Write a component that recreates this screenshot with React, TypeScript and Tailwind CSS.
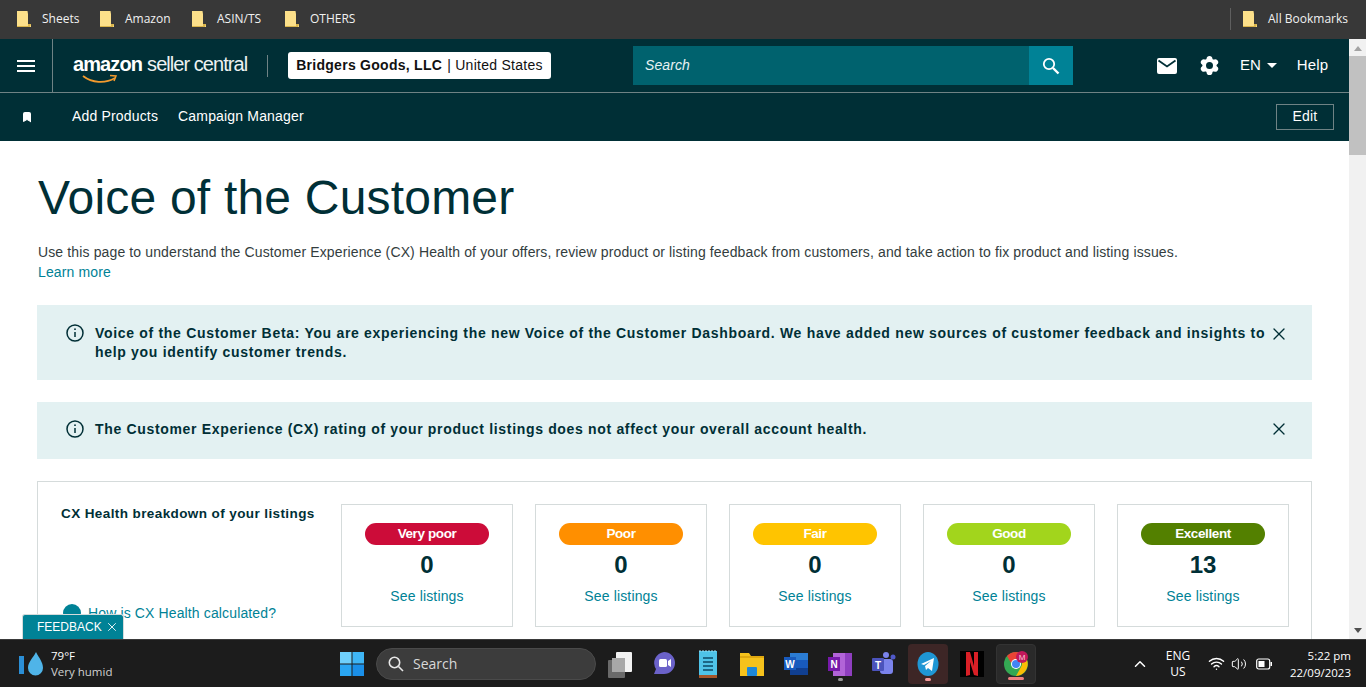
import React from "react";
import { Bookmark, ChevronUp, Settings, Volume2, Wifi, X } from "lucide-react";

const FolderIcon = () => (
  <svg width="14" height="16" viewBox="0 0 14 16" className="shrink-0">
    <path d="M0 0h10.5l.5 3v10h3v3H0z" fill="#fce08a" />
    <path d="M11 13h3l-1 3h-2z" fill="#d9b44a" />
    <path d="M0 15h11v1H0z" fill="#d9b44a" />
  </svg>
);

const InfoIcon = () => (
  <svg width="18" height="18" viewBox="0 0 18 18" className="shrink-0" fill="none" stroke="#002f36">
    <circle cx="9" cy="9" r="8" strokeWidth="1.5" />
    <path d="M9 8v5" strokeWidth="1.5" />
    <circle cx="9" cy="5.2" r="0.9" fill="#002f36" stroke="none" />
  </svg>
);

const Tile = ({ label, color, count }: { label: string; color: string; count: number }) => (
  <div className="flex h-[123px] w-[172px] flex-col items-center border border-[#d5dbdb] pt-[18px]">
    <div className={`h-[22px] w-[124px] rounded-full text-center text-[13.5px] leading-[21px] font-bold tracking-[-0.4px] text-white ${color}`}>
      {label}
    </div>
    <div className="mt-[6px] text-[24px] leading-[28px] font-bold text-[#002f36]">{count}</div>
    <a className="mt-[7px] text-[14px] leading-[20px] tracking-[0.15px] text-[#008296]">See listings</a>
  </div>
);

const TaskIcon = ({ children, active, mark }: { children: React.ReactNode; active?: string; mark?: string }) => (
  <div className={`relative flex h-10 w-10 items-center justify-center rounded ${active ?? ""}`}>
    {children}
    {mark && <div className={`absolute bottom-[3px] h-[3px] rounded-full ${mark}`} />}
  </div>
);

export default function App() {
  return (
    <div className="flex h-[687px] w-[1366px] flex-col overflow-hidden bg-white font-['Liberation_Sans',Arial,sans-serif]">
      {/* bookmarks */}
      <div className="flex h-[39px] shrink-0 items-center bg-[#383838] pr-[18px] pb-[1px] pl-[17px] font-['Open_Sans',sans-serif] text-[12px] text-[#f1f1f1]">
        <div className="flex w-[83px] items-center gap-[11px]"><FolderIcon />Sheets</div>
        <div className="flex w-[92px] items-center gap-[11px]"><FolderIcon />Amazon</div>
        <div className="flex w-[93px] items-center gap-[11px]"><FolderIcon />ASIN/TS</div>
        <div className="flex items-center gap-[11px]"><FolderIcon />OTHERS</div>
        <div className="ml-auto flex items-center">
          <div className="mr-[12px] h-[22px] w-px bg-[#5f5f5f]" />
          <FolderIcon />
          <span className="ml-[11px]">All Bookmarks</span>
        </div>
      </div>

      <div className="flex min-h-0 flex-1">
        <div className="relative w-[1349px] shrink-0 overflow-hidden">
          {/* top nav */}
          <div className="flex h-[54px] items-center border-b border-[#6f8385] bg-[#002f36] text-white">
            <div className="flex h-full w-[53px] items-center justify-center border-r border-[#6f8385]">
              <svg width="18" height="12" viewBox="0 0 18 12" fill="white">
                <rect y="0" width="18" height="2" /><rect y="5" width="18" height="2" /><rect y="10" width="18" height="2" />
              </svg>
            </div>
            <div className="relative ml-[20px] flex h-[40px] w-[174px] items-start pt-[7px] leading-[22px] whitespace-nowrap">
              <span className="text-[20px] font-bold tracking-[-0.9px]">amazon</span>
              <span className="ml-[5px] text-[20px] tracking-[-0.95px] text-[#eef2f2]">seller central</span>
              <svg className="absolute top-[28px] left-[9px]" width="36" height="11" viewBox="0 0 36 11" fill="none">
                <path d="M1 2c9 7 22 8 32 2" stroke="#f29a2e" strokeWidth="1.8" />
                <path d="M28 1.5l6 .5-2 5" stroke="#f29a2e" strokeWidth="1.5" />
              </svg>
            </div>
            <div className="ml-[20px] h-[22px] w-px bg-[#6f8385]" />
            <div className="ml-[20px] flex h-[27px] w-[263px] items-center justify-center rounded-[3px] bg-white text-[14px] tracking-[0.27px] text-[#111]">
              <span className="font-bold">Bridgers Goods, LLC</span>
              <span className="ml-[5px]">| United States</span>
            </div>
            <div className="ml-[82px] flex h-[39px] w-[440px]">
              <div className="flex flex-1 items-center bg-[#00626e] pl-[12px] text-[14px] tracking-[0.1px] text-[#e8f2f3] italic">Search</div>
              <div className="flex w-[44px] items-center justify-center bg-[#008296]">
                <svg width="18" height="18" viewBox="0 0 18 18" fill="none" stroke="white">
                  <circle cx="7" cy="7" r="5.2" strokeWidth="1.8" />
                  <path d="M11 11l5.500 5.500" strokeWidth="2.400" />
                </svg>
              </div>
            </div>
            <div className="ml-[83px] flex w-[22px] items-center justify-center">
              <svg width="20" height="16" viewBox="0 0 20 16">
                <rect width="20" height="16" rx="2" fill="white" />
                <path d="M1.500 2.500L10 8.500l8.500-6" fill="none" stroke="#002f36" strokeWidth="1.800" />
              </svg>
            </div>
            <div className="ml-[20px] flex w-[22px] justify-center">
              <Settings size={21} fill="white" stroke="white" strokeWidth={2} className="[&>circle]:fill-[#002f36] [&>circle]:stroke-[#002f36]" />
            </div>
            <div className="ml-[20px] flex items-center pb-[1px] text-[15px]">
              EN
              <span className="ml-[6px] h-0 w-0 border-x-[5px] border-t-[5px] border-x-transparent border-t-white" />
            </div>
            <div className="ml-[20px] pb-[1px] text-[15px] tracking-[0.1px]">Help</div>
          </div>
          {/* second nav */}
          <div className="flex h-[48px] items-center bg-[#002f36] pb-[1px] text-[14px] tracking-[0.17px] text-white">
            <Bookmark size={12} fill="white" stroke="white" className="ml-[21px]" />
            <span className="ml-[39px]">Add Products</span>
            <span className="ml-[20px]">Campaign Manager</span>
            <div className="mr-[15px] ml-auto flex h-[26px] w-[58px] items-center justify-center border border-[#6f8385]">Edit</div>
          </div>

          {/* page */}
          <div className="px-[37px] pt-[29px]">
            <h1 className="pl-[1px] text-[48px] leading-[56px] font-normal tracking-[0.2px] text-[#002f36]">Voice of the Customer</h1>
            <p className="mt-[16px] pl-[1px] text-[14px] leading-[20px] tracking-[0.13px] text-[#333d3e]">
              Use this page to understand the Customer Experience (CX) Health of your offers, review product or listing feedback from customers, and take action to fix product and listing issues.
              <br />
              <a className="text-[#008296]">Learn more</a>
            </p>

            <div className="mt-[23px] flex h-[75px] items-start bg-[#e3f1f2] pt-[19px] pr-[23px] pl-[29px] text-[14px] leading-[19px] font-bold tracking-[0.69px] text-[#002f36]">
              <InfoIcon />
              <div className="ml-[11px] flex-1">
                Voice of the Customer Beta: You are experiencing the new Voice of the Customer Dashboard. We have added new sources of customer feedback and insights to help you identify customer trends.
              </div>
              <X size={20} strokeWidth={1.6} className="shrink-0" />
            </div>

            <div className="mt-[22px] flex h-[57px] items-center bg-[#e3f1f2] pr-[23px] pb-[3px] pl-[29px] text-[14px] font-bold tracking-[0.67px] text-[#002f36]">
              <InfoIcon />
              <div className="ml-[11px] flex-1">
                The Customer Experience (CX) rating of your product listings does not affect your overall account health.
              </div>
              <X size={20} strokeWidth={1.6} className="shrink-0" />
            </div>

            <div className="mt-[22px] flex gap-[22px] border border-[#d5dbdb] py-[22px] pr-[22px] pl-[23px]">
              <div className="flex w-[258px] shrink-0 flex-col justify-between">
                <div className="pt-[1px] text-[13.5px] leading-[18px] font-bold tracking-[0.4px] text-[#002f36]">CX Health breakdown of your listings</div>
                <div className="mb-[4px] flex items-center gap-[7px] pl-[2px] text-[14px] leading-[20px] tracking-[0.13px] text-[#008296]">
                  <div className="h-[18px] w-[18px] rounded-full bg-[#008296]" />
                  How is CX Health calculated?
                </div>
              </div>
              <Tile label="Very poor" color="bg-[#cc0c39]" count={0} />
              <Tile label="Poor" color="bg-[#ff8f00]" count={0} />
              <Tile label="Fair" color="bg-[#ffc400]" count={0} />
              <Tile label="Good" color="bg-[#a2d51c]" count={0} />
              <Tile label="Excellent" color="bg-[#538000]" count={13} />
            </div>
          </div>

          {/* feedback tab */}
          <div className="absolute bottom-0 left-[22px] flex h-[25px] w-[102px] items-center rounded-t-[3px] border-x border-t border-[#d5dbdb] bg-[#008296] pl-[14px] text-[12px] text-white">
            FEEDBACK
            <X size={14} strokeWidth={1.5} className="ml-[3px]" />
          </div>
        </div>

        {/* scrollbar */}
        <div className="flex w-[17px] shrink-0 flex-col items-center bg-[#f1f1f1]">
          <div className="mt-[7px] h-0 w-0 border-x-[4px] border-b-[5px] border-x-transparent border-b-[#a3a3a3]" />
          <div className="mt-[5px] h-[99px] w-full bg-[#c1c1c1]" />
          <div className="mt-auto mb-[6px] h-0 w-0 border-x-[4px] border-t-[5px] border-x-transparent border-t-[#505050]" />
        </div>
      </div>

      {/* taskbar */}
      <div className="flex h-[48px] shrink-0 items-center border-t border-[#3a3a3a] bg-[#1c1c1c] font-['Open_Sans',sans-serif] text-white">
        <div className="flex w-[340px] shrink-0 items-center pl-[19px]">
          <svg width="26" height="26" viewBox="0 0 26 26">
            <rect x="0" y="5" width="5" height="18" fill="#2b8fd6" />
            <path d="M17 1c3 6 7 10 7 16a7.500 7.500 0 0 1-15 0c0-6 5-10 8-16z" fill="#4fb4e8" />
          </svg>
          <div className="ml-[6px] text-[11.500px] leading-[16px]">
            <div>79°F</div>
            <div className="text-[#d0d0d0]">Very humid</div>
          </div>
        </div>
        <svg width="24" height="24" viewBox="0 0 24 24" className="shrink-0">
          <rect x="0" y="0" width="11.500" height="11.500" fill="#6fd0fb" />
          <rect x="12.500" y="0" width="11.500" height="11.500" fill="#3fb6f5" />
          <rect x="0" y="12.500" width="11.500" height="11.500" fill="#2aa6f2" />
          <rect x="12.500" y="12.500" width="11.500" height="11.500" fill="#1a8fe8" />
        </svg>
        <div className="ml-[12px] flex h-[32px] w-[220px] shrink-0 items-center rounded-full border border-[#4a4a4a] bg-[#3c3c3c] pl-[11px] text-[14px] text-[#d8d8d8]">
          <svg width="16" height="16" viewBox="0 0 16 16" fill="none" stroke="#e8e8e8" strokeWidth="1.600">
            <circle cx="6.500" cy="6.500" r="5.200" />
            <path d="M10.500 10.500L15 15" />
          </svg>
          <span className="ml-[9px]">Search</span>
        </div>
        <div className="ml-[4px] flex shrink-0 items-center gap-[4px]">
          <TaskIcon>
            <svg width="26" height="28" viewBox="0 0 26 28">
              <rect x="1" y="10" width="17" height="18" rx="1" fill="#6a6a6a" />
              <rect x="9" y="2" width="16" height="20" rx="1" fill="#f2f2f2" />
              <rect x="5" y="8" width="13" height="14" fill="#a8a8a8" />
            </svg>
          </TaskIcon>
          <TaskIcon>
            <svg width="24" height="28" viewBox="0 0 24 28">
              <path d="M12 2a11 11 0 0 1 0 22H2l2-5A11 11 0 0 1 12 2z" fill="#6b62c9" />
              <rect x="7" y="9" width="8" height="8" rx="1.500" fill="white" />
              <path d="M16 11l3-2v8l-3-2z" fill="white" />
            </svg>
          </TaskIcon>
          <TaskIcon>
            <svg width="24" height="30" viewBox="0 0 24 30">
              <rect x="3" y="2" width="18" height="25" fill="#4fc3e8" />
              <rect x="3" y="26" width="18" height="3" fill="#a5562a" />
              <path d="M7 9h10M7 13h10M7 17h10M7 21h10" stroke="#0c4a66" strokeWidth="1.600" />
              <path d="M4 1v2M7 1v2M10 1v2M13 1v2M16 1v2M19 1v2" stroke="#9fe0f5" />
            </svg>
          </TaskIcon>
          <TaskIcon>
            <svg width="24" height="24" viewBox="0 0 24 24">
              <path d="M0 1h9l2 3h13v20H0z" fill="#f6c21c" />
              <rect x="0" y="4" width="24" height="2" fill="#e0a80f" />
              <rect x="7" y="15" width="10" height="9" rx="1" fill="#1f88d8" />
            </svg>
          </TaskIcon>
          <TaskIcon>
            <svg width="24" height="24" viewBox="0 0 24 24">
              <rect x="6" y="1" width="18" height="8" fill="#2b7cd3" />
              <rect x="6" y="8" width="18" height="8" fill="#185abd" />
              <rect x="6" y="16" width="18" height="7" fill="#103f91" />
              <rect x="0" y="5" width="12" height="13" fill="#185abd" />
              <text x="6" y="15.500" textAnchor="middle" fontSize="10" fontWeight="700" fill="white" fontFamily="Liberation Sans">W</text>
            </svg>
          </TaskIcon>
          <TaskIcon mark="w-[5px] bg-[#9a9a9a]">
            <svg width="24" height="24" viewBox="0 0 24 24">
              <rect x="5" y="1" width="19" height="23" fill="#b264d8" />
              <rect x="17" y="1" width="7" height="23" fill="#8f3fc0" />
              <rect x="0" y="5" width="12" height="14" fill="#7719aa" />
              <text x="6" y="16" textAnchor="middle" fontSize="10" fontWeight="700" fill="white" fontFamily="Liberation Sans">N</text>
            </svg>
          </TaskIcon>
          <TaskIcon>
            <svg width="24" height="26" viewBox="0 0 24 26">
              <circle cx="14" cy="4" r="3" fill="#7b83eb" />
              <circle cx="21" cy="6" r="2.500" fill="#5059c9" />
              <rect x="8" y="8" width="13" height="15" rx="3" fill="#7b83eb" />
              <rect x="0" y="7" width="12" height="13" rx="1" fill="#4b53bc" />
              <text x="6" y="17.500" textAnchor="middle" fontSize="10" fontWeight="700" fill="white" fontFamily="Liberation Sans">T</text>
            </svg>
          </TaskIcon>
          <TaskIcon active="bg-[#3d2626]" mark="w-[6px] bg-[#f59a9a]">
            <svg width="22" height="24" viewBox="0 0 22 24">
              <ellipse cx="11" cy="12" rx="10.500" ry="12" fill="#1f96d4" />
              <path d="M4 12l13-6-2 13-4-3-2 2-1-4 6-5-7 4z" fill="white" />
            </svg>
          </TaskIcon>
          <TaskIcon>
            <svg width="24" height="26" viewBox="0 0 24 26">
              <rect width="24" height="26" fill="#000" />
              <path d="M6 1h4l4 14V1h4v24l-4-1-4-13v13l-4 1z" fill="#d81f26" />
            </svg>
          </TaskIcon>
          <TaskIcon active="bg-[#2a2a2a] border border-[#333]" mark="w-[16px] bg-[#f08080]">
            <svg width="24" height="26" viewBox="0 0 24 26">
              <circle cx="12" cy="13" r="12" fill="#34a853" />
              <path d="M12 1a12 12 0 0 1 11 8H12a5 5 0 0 0-5 3L3 5a12 12 0 0 1 9-4z" fill="#ea4335" />
              <path d="M23 9a12 12 0 0 1-11 16l5-9a5 5 0 0 0-1-7z" fill="#fbbc05" />
              <circle cx="12" cy="13" r="5" fill="white" />
              <circle cx="12" cy="13" r="4" fill="#4285f4" />
              <circle cx="18" cy="6" r="6" fill="#c2185b" />
              <text x="18" y="9" textAnchor="middle" fontSize="8" fill="#f8c8d8" fontFamily="Liberation Sans">M</text>
            </svg>
          </TaskIcon>
        </div>
        <div className="ml-auto flex shrink-0 items-center pr-[15px]">
          <ChevronUp size={18} strokeWidth={2} />
          <div className="ml-[12px] w-[34px] text-center text-[12px] leading-[16px]">
            ENG
            <br />
            US
          </div>
          <Wifi size={17} strokeWidth={2} className="ml-[13px]" />
          <Volume2 size={16} strokeWidth={1.500} className="ml-[6px]" />
          <svg width="16" height="12" viewBox="0 0 16 12" className="ml-[9px]" fill="none">
            <rect x="0.700" y="1" width="13" height="10" rx="2" stroke="white" strokeWidth="1.200" />
            <rect x="2.500" y="3" width="6" height="6" fill="white" />
            <rect x="14.500" y="4" width="1.500" height="4" fill="white" />
          </svg>
          <div className="ml-[18px] text-right text-[11.500px] leading-[17px]">
            5:22 pm
            <br />
            22/09/2023
          </div>
        </div>
      </div>
    </div>
  );
}
